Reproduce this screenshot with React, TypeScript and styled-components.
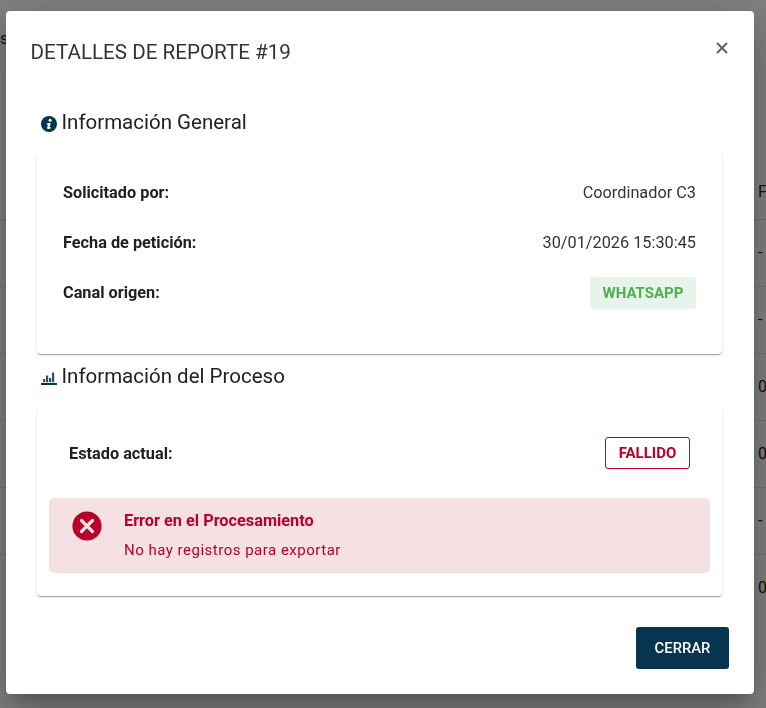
import React from 'react';
import styled, { createGlobalStyle } from 'styled-components';

const Global = createGlobalStyle`
  html, body { margin: 0; padding: 0; height: 100%; background: #fff; }
  body { font-family: Roboto, "Liberation Sans", sans-serif; color: #212121; overflow: hidden; }
  * { box-sizing: border-box; }
`;

const BackPage = styled.div`
  height: 708px;
  width: 766px;
  overflow: hidden;
`;
const BackTitle = styled.div`
  height: 153px;
  padding-top: 29px;
  font-size: 16px;
  line-height: 20px;
`;
const BackHead = styled.div`
  height: 67px;
  padding-top: 10px;
  border-bottom: 1px solid #dcdcdc;
  display: flex;
  justify-content: flex-end;
  align-items: center;
  font-size: 16px;
  color: #0a3653;
`;
const BackRow = styled.div<{ $last?: boolean }>`
  height: 67px;
  border-bottom: 1px solid ${(p) => (p.$last ? 'transparent' : '#e0e0e0')};
  display: flex;
  align-items: center;
  justify-content: flex-end;
  font-size: 16px;
  line-height: 20px;
`;
const BackCell = styled.span`
  width: 8px;
`;

const Overlay = styled.div`
  position: fixed;
  inset: 0;
  background: rgba(0, 0, 0, 0.5);
  padding: 11px 12px 14px 6px;
`;
const Modal = styled.div`
  width: 748px;
  height: 683px;
  background: #fff;
  border-radius: 4px;
  box-shadow: 0 11px 15px -7px rgba(0, 0, 0, 0.2), 0 24px 38px 3px rgba(0, 0, 0, 0.14), 0 9px 46px 8px rgba(0, 0, 0, 0.12);
  display: flex;
  flex-direction: column;
  padding: 0 25px 25px 24.6px;
`;
const Header = styled.div`
  height: 82px;
  display: flex;
  justify-content: space-between;
  align-items: center;
`;
const Title = styled.h2`
  margin: 0;
  font-size: 20.6px;
  font-weight: 400;
  line-height: 24px;
  color: #333;
`;
const Close = styled.button`
  border: 0;
  background: none;
  padding: 0;
  width: 14px;
  height: 14px;
  display: flex;
  margin-top: -9px;
  color: #616161;
`;
const Body = styled.div`
  flex: 1;
  padding: 0 7px 0 6.4px;
`;
const SectionTitle = styled.h3`
  margin: 0;
  height: 59px;
  padding: 0 0 2px 4px;
  display: flex;
  align-items: center;
  gap: 4.5px;
  font-size: 20.5px;
  font-weight: 400;
  line-height: 24px;
  color: #212121;
`;
const SectionIcon = styled.span`
  display: flex;
  width: 16px;
  height: 16px;
  color: #07344f;
  margin-top: 5px;
`;
const Card = styled.div`
  background: #fff;
  border-radius: 4px;
  box-shadow: 0 2px 1px -1px rgba(0, 0, 0, 0.2), 0 1px 1px 0 rgba(0, 0, 0, 0.14), 0 1px 3px 0 rgba(0, 0, 0, 0.12);
`;
const InfoCard = styled(Card)`
  height: 202px;
  padding: 16px 26px 0;
  margin-bottom: -7px;
`;
const ProcessCard = styled(Card)`
  height: 190px;
  padding: 12px 12px 0;
`;
const InfoRow = styled.div`
  display: flex;
  justify-content: space-between;
  align-items: center;
  height: 50px;
  line-height: 20px;
`;
const Label = styled.span`
  font-weight: 700;
  font-size: 16.3px;
  color: #212121;
`;
const Value = styled.span`
  font-size: 16.3px;
  color: #333;
`;
const ChannelChip = styled.span`
  display: inline-flex;
  align-items: center;
  justify-content: center;
  width: 106px;
  height: 32px;
  background: #e8f3ea;
  color: #4caf50;
  border-radius: 3px;
  font-size: 15px;
  font-weight: 700;
`;
const StatusRow = styled.div`
  display: flex;
  justify-content: space-between;
  align-items: center;
  height: 70px;
  padding: 0 20px;
`;
const StatusChip = styled.span`
  display: inline-flex;
  align-items: center;
  justify-content: center;
  width: 85px;
  height: 32px;
  border: 1px solid #b7002a;
  border-radius: 3px;
  color: #b7002a;
  font-size: 15px;
  font-weight: 700;
`;
const ErrorBox = styled.div`
  margin-top: 10px;
  height: 75px;
  background: #f5e0e3;
  border-radius: 5px;
  padding: 13px 23px;
  display: flex;
  gap: 22px;
  color: #b7002a;
`;
const ErrorIcon = styled.span`
  display: flex;
  width: 30px;
  height: 30px;
`;
const ErrorText = styled.div`
  display: flex;
  flex-direction: column;
  gap: 9px;
`;
const ErrorTitle = styled.div`
  font-size: 16.3px;
  font-weight: 700;
  line-height: 20px;
`;
const ErrorMessage = styled.div`
  font-size: 15px;
  line-height: 20px;
  letter-spacing: 0.5px;
`;
const Actions = styled.div`
  display: flex;
  justify-content: flex-end;
`;
const PrimaryButton = styled.button`
  width: 93px;
  height: 42px;
  border: 0;
  border-radius: 3px;
  background: #07344f;
  color: #fff;
  font-family: inherit;
  font-size: 14.8px;
  font-weight: 500;
`;

const rows = ['-', '-', '0', '0', '-', '0'];

export default function App() {
  return (
    <>
      <Global />
      <BackPage>
        <BackTitle>s</BackTitle>
        <BackHead><BackCell>F</BackCell></BackHead>
        {rows.map((r, i) => (
          <BackRow key={i} $last={i === rows.length - 1}><BackCell>{r}</BackCell></BackRow>
        ))}
      </BackPage>
      <Overlay>
        <Modal>
          <Header>
            <Title>DETALLES DE REPORTE #19</Title>
            <Close aria-label="Cerrar">
              <svg width="14" height="14" viewBox="0 0 14 14" fill="none" stroke="currentColor" strokeWidth="2">
                <path d="M2 2l10 10M12 2L2 12" />
              </svg>
            </Close>
          </Header>
          <Body>
            <SectionTitle>
              <SectionIcon>
                <svg width="16" height="16" viewBox="0 0 16 16">
                  <circle cx="8" cy="8" r="8" fill="currentColor" />
                  <circle cx="9.1" cy="4.3" r="1.55" fill="#fff" />
                  <path d="M5.9 7.3 L9.7 6.9 L8.6 11.3 L9.9 11.2 L9.6 12.6 C8.6 13 7.6 13.1 6.8 13 C6.2 12.8 6 12.3 6.2 11.6 L7 8.7 L5.7 8.5 Z" fill="#fff" />
                </svg>
              </SectionIcon>
              Información General
            </SectionTitle>
            <InfoCard>
              <InfoRow><Label>Solicitado por:</Label><Value>Coordinador C3</Value></InfoRow>
              <InfoRow><Label>Fecha de petición:</Label><Value>30/01/2026 15:30:45</Value></InfoRow>
              <InfoRow><Label>Canal origen:</Label><ChannelChip>WHATSAPP</ChannelChip></InfoRow>
            </InfoCard>
            <SectionTitle>
              <SectionIcon>
                <svg width="16" height="16" viewBox="0 0 16 16" fill="currentColor">
                  <rect x="0" y="13" width="16" height="2" />
                  <rect x="2" y="9" width="2.2" height="3.2" opacity=".85" />
                  <rect x="5" y="5.5" width="2.2" height="6.7" opacity=".85" />
                  <rect x="8" y="8" width="2.2" height="4.2" opacity=".85" />
                  <rect x="11" y="2.5" width="2.2" height="9.7" opacity=".85" />
                </svg>
              </SectionIcon>
              Información del Proceso
            </SectionTitle>
            <ProcessCard>
              <StatusRow><Label>Estado actual:</Label><StatusChip>FALLIDO</StatusChip></StatusRow>
              <ErrorBox>
                <ErrorIcon>
                  <svg width="30" height="30" viewBox="0 0 30 30">
                    <circle cx="15" cy="15" r="14.6" fill="currentColor" />
                    <path d="M9.5 9.5l11 11M20.5 9.5l-11 11" stroke="#f5e0e3" strokeWidth="3.2" strokeLinecap="round" />
                  </svg>
                </ErrorIcon>
                <ErrorText>
                  <ErrorTitle>Error en el Procesamiento</ErrorTitle>
                  <ErrorMessage>No hay registros para exportar</ErrorMessage>
                </ErrorText>
              </ErrorBox>
            </ProcessCard>
          </Body>
          <Actions><PrimaryButton>CERRAR</PrimaryButton></Actions>
        </Modal>
      </Overlay>
    </>
  );
}
